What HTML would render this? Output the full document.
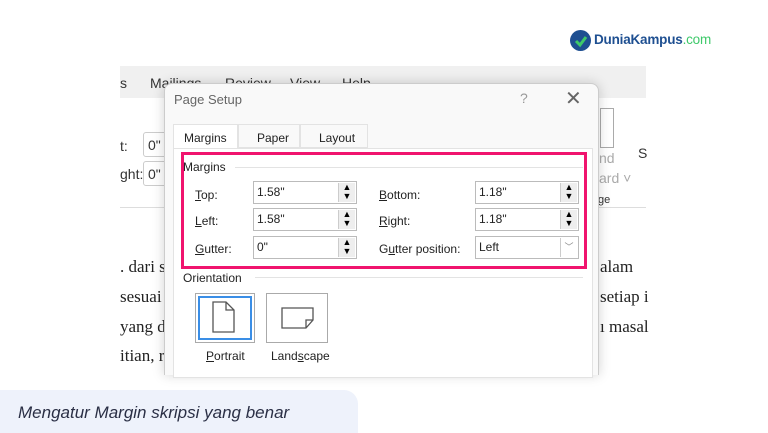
<!DOCTYPE html>
<html><head><style>
*{box-sizing:border-box;margin:0;padding:0}
body{width:768px;height:433px;background:#fff;position:relative;overflow:hidden;font-family:"Liberation Sans",sans-serif}
.abs{position:absolute}
.ui{font-family:"Liberation Sans",sans-serif;font-size:12px;color:#222}
.menu{left:120px;top:66px;width:526px;height:32px;background:#f0f0f0}
.rib{left:120px;top:98px;width:526px;height:110px;background:#fff;border-bottom:1px solid #ddd}
.doc{font-family:"Liberation Serif",serif;font-size:17px;color:#222}
.dlg{left:164px;top:83px;width:435px;height:292px;background:#f9f9f9;border:1px solid #ccc;border-bottom:none;border-radius:8px 8px 0 0;box-shadow:0 0 12px rgba(0,0,0,.18)}
.inp{background:#fff;border:1px solid #bbb;height:23px;font-size:12px;padding:3px 0 0 3px;position:absolute}
.spin{position:absolute;right:1px;top:1px;width:17px;height:19px;background:#eee;border-left:1px solid #ccc;font-size:9px;line-height:9px;text-align:center;color:#000}
u{text-decoration:underline}
</style></head><body>
<div class="abs" style="left:570px;top:30px;width:21px;height:21px;border-radius:50%;background:#1e4f91"></div>
<svg class="abs" style="left:573px;top:33px" width="16" height="16"><path d="M3 8 L7 12 L13 4" stroke="#3ec96a" stroke-width="3" fill="none"/></svg>
<div class="abs" style="left:594px;top:32px;font-size:13.5px;font-weight:bold;color:#1e4f91;letter-spacing:-0.2px">DuniaKampus<span style="color:#3ec96a;font-weight:normal">.com</span></div>

<div class="abs menu ui" style="font-size:14px;color:#333"><span class="abs" style="left:0;top:9px">s</span><span class="abs" style="left:30px;top:9px">Mailings</span><span class="abs" style="left:105px;top:9px">Review</span><span class="abs" style="left:170px;top:9px">View</span><span class="abs" style="left:222px;top:9px">Help</span></div>
<div class="abs rib ui" style="font-size:14px;color:#333">
<span class="abs" style="left:0;top:40px">t:</span><div class="abs" style="left:23px;top:34px;width:40px;height:25px;border:1px solid #ccc;border-radius:3px;padding:4px">0"</div>
<span class="abs" style="left:0;top:68px">ght:</span><div class="abs" style="left:23px;top:63px;width:40px;height:25px;border:1px solid #ccc;border-radius:3px;padding:4px">0"</div>
<div class="abs" style="left:480px;top:10px;width:14px;height:40px;border:1px solid #aaa"></div>
<span class="abs" style="left:479px;top:52px;color:#aaa">nd</span><span class="abs" style="left:479px;top:72px;color:#aaa">ard ˅</span><span class="abs" style="left:518px;top:47px">S</span><span class="abs" style="left:478px;top:96px;font-size:11px">ge</span>
</div>
<div class="abs doc" style="left:120px;top:257px">. dari s</div><div class="abs doc" style="left:600px;top:257px">alam</div>
<div class="abs doc" style="left:120px;top:287px">sesuai</div><div class="abs doc" style="left:600px;top:287px">setiap i</div>
<div class="abs doc" style="left:120px;top:317px">yang d</div><div class="abs doc" style="left:600px;top:317px">ı masal</div>
<div class="abs doc" style="left:120px;top:346px">itian, r</div>

<div class="abs dlg ui">
<span class="abs" style="left:9px;top:8px;font-size:13px;color:#666">Page Setup</span>
<span class="abs" style="left:355px;top:6px;font-size:14px;color:#999">?</span>
<span class="abs" style="left:400px;top:2px;font-size:20px;color:#666">✕</span>
<div class="abs" style="left:8px;top:40px;width:65px;height:25px;background:#fff;border:1px solid #e3e3e3;border-bottom:none;padding:6px 0 0 10px">Margins</div>
<div class="abs" style="left:73px;top:40px;width:62px;height:24px;border:1px solid #e3e3e3;padding:6px 0 0 18px">Paper</div>
<div class="abs" style="left:135px;top:40px;width:68px;height:24px;border:1px solid #e3e3e3;padding:6px 0 0 18px">Layout</div>
<div class="abs" style="left:8px;top:64px;width:420px;height:230px;background:#fff;border:1px solid #e3e3e3"></div>
<div class="abs" style="left:16px;top:68px;width:406px;height:117px;border:3px solid #f0146e"></div>
<span class="abs" style="left:18px;top:76px">Margins</span><div class="abs" style="left:70px;top:83px;width:348px;height:1px;background:#e3e3e3"></div>
<span class="abs" style="left:30px;top:104px"><u>T</u>op:</span>
<span class="abs" style="left:30px;top:130px"><u>L</u>eft:</span>
<span class="abs" style="left:30px;top:158px"><u>G</u>utter:</span>
<span class="abs" style="left:214px;top:104px"><u>B</u>ottom:</span>
<span class="abs" style="left:214px;top:130px"><u>R</u>ight:</span>
<span class="abs" style="left:214px;top:158px">G<u>u</u>tter position:</span>
<div class="inp" style="left:88px;top:97px;width:104px">1.58"<div class="spin">▲<br>▼</div></div>
<div class="inp" style="left:88px;top:124px;width:104px">1.58"<div class="spin">▲<br>▼</div></div>
<div class="inp" style="left:88px;top:152px;width:104px">0"<div class="spin">▲<br>▼</div></div>
<div class="inp" style="left:310px;top:97px;width:104px">1.18"<div class="spin">▲<br>▼</div></div>
<div class="inp" style="left:310px;top:124px;width:104px">1.18"<div class="spin">▲<br>▼</div></div>
<div class="inp" style="left:310px;top:152px;width:104px">Left<div class="spin" style="background:#fff;font-size:9px;line-height:19px;color:#888">﹀</div></div>
<span class="abs" style="left:18px;top:187px">Orientation</span><div class="abs" style="left:90px;top:193px;width:328px;height:1px;background:#e3e3e3"></div>
<div class="abs" style="left:30px;top:209px;width:60px;height:50px;border:1px solid #aaa;background:#fff"><div style="margin:2px;width:54px;height:44px;border:2px solid #3a8ee6"></div></div>
<svg class="abs" style="left:46px;top:216px" width="26" height="34"><path d="M2 2 H15 L23 10 V32 H2 Z M15 2 V10 H23" stroke="#555" stroke-width="1.3" fill="none"/></svg>
<div class="abs" style="left:101px;top:209px;width:62px;height:50px;border:1px solid #aaa;background:#fff"></div>
<svg class="abs" style="left:115px;top:222px" width="36" height="26"><path d="M2 2 H33 V14 L26 22 H2 Z M33 14 H26 V22" stroke="#555" stroke-width="1.3" fill="none"/></svg>
<span class="abs" style="left:41px;top:265px"><u>P</u>ortrait</span>
<span class="abs" style="left:106px;top:265px">Land<u>s</u>cape</span>
</div>

<div class="abs" style="left:0;top:390px;width:358px;height:43px;background:#eef2fb;border-radius:0 14px 0 0"></div>
<div class="abs" style="left:18px;top:403px;font-size:17px;font-style:italic;color:#2a2f45">Mengatur Margin skripsi yang benar</div>
</body></html>
